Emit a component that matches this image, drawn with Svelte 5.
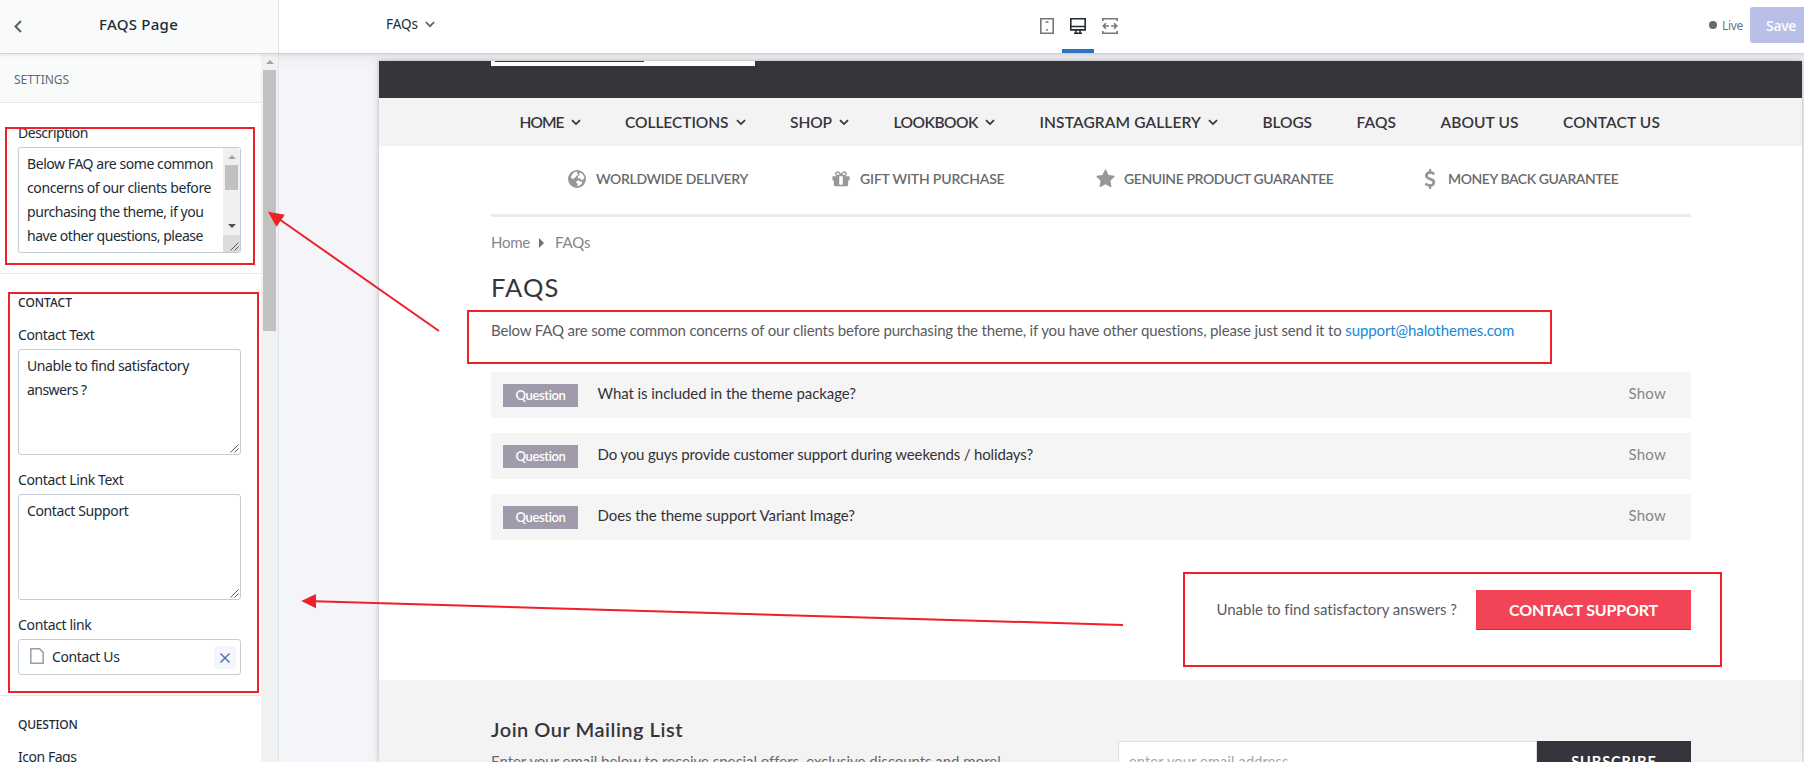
<script>
  // Tracks a run of text so that it spans the given width.
  function fit(node, width) {
    const natural = node.getBoundingClientRect().width;
    const count = node.textContent.length;
    node.style.letterSpacing = `${(width - natural) / count}px`;
  }

  const nav = [
    { label: 'HOME', width: 44, sub: true },
    { label: 'COLLECTIONS', width: 103.5, sub: true },
    { label: 'SHOP', width: 42, sub: true },
    { label: 'LOOKBOOK', width: 84.5, sub: true },
    { label: 'INSTAGRAM GALLERY', width: 161.5, sub: true },
    { label: 'BLOGS', width: 49.5 },
    { label: 'FAQS', width: 39.5 },
    { label: 'ABOUT US', width: 78 },
    { label: 'CONTACT US', width: 97 }
  ];

  const perks = [
    { icon: 'globe', label: 'WORLDWIDE DELIVERY', width: 152 },
    { icon: 'gift', label: 'GIFT WITH PURCHASE', width: 144.5 },
    { icon: 'star', label: 'GENUINE PRODUCT GUARANTEE', width: 209.5 },
    { icon: 'dollar', label: 'MONEY BACK GUARANTEE', width: 170.5 }
  ];

  const questions = [
    { text: 'What is included in the theme package?', width: 258.5 },
    { text: 'Do you guys provide customer support during weekends / holidays?', width: 435.5 },
    { text: 'Does the theme support Variant Image?', width: 257.5 }
  ];

  const description = [
    { text: 'Below FAQ are some common', width: 186 },
    { text: 'concerns of our clients before', width: 184 },
    { text: 'purchasing the theme, if you', width: 176.5 },
    { text: 'have other questions, please', width: 176 }
  ];
</script>

{#snippet grip()}
  <svg class="grip" width="9" height="9" viewBox="0 0 9 9"><path d="M.5 8.5l8-8M4.5 8.5l4-4" /></svg>
{/snippet}

<div class="app">
  <header class="topbar">
    <div class="side-head">
      <svg class="back" width="8" height="13" viewBox="0 0 8 13"><path d="M7 1L1.5 6.5 7 12" /></svg>
      <h1><span use:fit={79}>FAQS Page</span></h1>
    </div>
    <div class="page-pick">
      <span use:fit={32}>FAQs</span>
      <svg width="10" height="7" viewBox="0 0 10 7"><path d="M.8 1l4.2 4.2L9.2 1" /></svg>
    </div>
    <div class="devices">
      <span class="device">
        <svg width="16" height="16" viewBox="0 0 16 16"><path d="M1.8.8h12.4v14.4H1.8zM6.5 4h3M7 12h2" /></svg>
      </span>
      <span class="device on">
        <svg width="16" height="16" viewBox="0 0 16 16"><path d="M.8.8h14.4v11.1H.8zM.8 8.5h14.4M6 12v3.2M10 12v3.2M4 15.2h8" /></svg>
      </span>
      <span class="device">
        <svg width="16" height="16" viewBox="0 0 16 16"><path d="M.8 3V.8h14.4V3M.8 13v2.2h14.4V13M7 8H1.6M4 5.2L1.2 8 4 10.8M9 8h5.4M12 5.2L14.8 8 12 10.8" /></svg>
      </span>
    </div>
    <div class="status">
      <i class="dot"></i>
      <span class="live" use:fit={21}>Live</span>
      <button class="save"><span use:fit={30}>Save</span></button>
    </div>
  </header>

  <div class="body">
    <aside>
      <div class="panel">
        <h2 class="settings"><span use:fit={55}>SETTINGS</span></h2>
        <section class="first">
          <div class="label clip"><span use:fit={70}>Description</span></div>
          <div class="area">
            <div class="copy">
              {#each description as line}
                <div><span use:fit={line.width}>{line.text}</span></div>
              {/each}
            </div>
            <div class="mini-bar">
              <i class="up"></i>
              <i class="mini-thumb"></i>
              <i class="down"></i>
              <div class="corner">{@render grip()}</div>
            </div>
          </div>
        </section>
        <section>
          <h3><span use:fit={54}>CONTACT</span></h3>
          <div class="label"><span use:fit={76.500}>Contact Text</span></div>
          <div class="area">
            <div class="copy">
              <div><span use:fit={162}>Unable to find satisfactory</span></div>
              <div><span use:fit={59.500}>answers ?</span></div>
            </div>
            {@render grip()}
          </div>
          <div class="label next"><span use:fit={105.500}>Contact Link Text</span></div>
          <div class="area">
            <div class="copy"><div><span use:fit={101.500}>Contact Support</span></div></div>
            {@render grip()}
          </div>
          <div class="label next"><span use:fit={73.500}>Contact link</span></div>
          <div class="link-box">
            <svg class="doc" width="14" height="16" viewBox="0 0 14 16"><path d="M.8.8h8.7l3.7 3.7v10.7H.8z" /></svg>
            <span use:fit={67.500}>Contact Us</span>
            <button class="clear" aria-label="Clear">
              <svg width="10" height="10" viewBox="0 0 10 10"><path d="M.5.5l9 9M9.5.5l-9 9" /></svg>
            </button>
          </div>
        </section>
        <section class="last">
          <h3><span use:fit={59.500}>QUESTION</span></h3>
          <div class="label"><span use:fit={58.500}>Icon Faqs</span></div>
        </section>
      </div>
      <div class="scrollbar"><i class="up"></i><i class="thumb"></i></div>
    </aside>

    <main>
      <div class="preview">
        <div class="dark"><div class="search"><i></i></div></div>
        <nav>
          {#each nav as item}
            <a href="#top">
              <span use:fit={item.width}>{item.label}</span>
              {#if item.sub}
                <svg width="10" height="7" viewBox="0 0 10 7"><path d="M1 1.2l4 3.9 4-3.9" /></svg>
              {/if}
            </a>
          {/each}
        </nav>

        <div class="content">
          <div class="perks">
            {#each perks as perk}
              <div class="perk">
                {#if perk.icon === 'globe'}
                  <svg width="18" height="18" viewBox="0 0 18 18">
                    <circle cx="9" cy="9" r="9" />
                    <path class="land" d="M6.200 2.200L9.400 1.600l-.6 1.500 1.500 1-.4 1.300-1.800.4-.5 1.700-1.700.6-.8 1.200-1.600-1-.6-2zM11.500 2.300l3 1.700 1.900 3.200-1 2.300-1.900.4-1.300-1.500-2-.2-.6-1.700 1.700-1.300zM8.600 11l1.800-.6 2.100 1.100 1.900.3-.9 2.100-2.300 1.900-1.900.5.3-2.500-1.300-1.300z" />
                  </svg>
                {:else if perk.icon === 'gift'}
                  <svg width="18" height="20" viewBox="0 0 1536 1792"><path d="M928 1356v-716h-320v716q0 25 18 38.5t46 13.5h192q28 0 46-13.5t18-38.5zm-456-844h195l-126-161q-26-31-69-31-40 0-68 28t-28 68 28 68 68 28zm688-96q0-40-28-68t-68-28q-43 0-69 31l-125 161h194q40 0 68-28t28-68zm376 256v320q0 14-9 23t-23 9h-96v416q0 40-28 68t-68 28h-1088q-40 0-68-28t-28-68v-416h-96q-14 0-23-9t-9-23v-320q0-14 9-23t23-9h440q-93 0-158.5-65.5t-65.5-158.5 65.5-158.5 158.500-65.500q107 0 168 77l128 165 128-165q61-77 168-77 93 0 158.500 65.500t65.500 158.500-65.500 158.500-158.500 65.500h440q14 0 23 9t9 23z" /></svg>
                {:else if perk.icon === 'star'}
                  <svg width="19" height="20" viewBox="0 0 1664 1792"><path d="M1664 647q0 22-26 48l-363 354 86 500q1 7 1 20 0 21-10.5 35.5t-30.5 14.500q-19 0-40-12l-449-236-449 236q-22 12-40 12-21 0-31.500-14.500t-10.500-35.500q0-6 2-20l86-500-364-354q-25-27-25-48 0-37 56-46l502-73 225-455q19-41 49-41t49 41l225 455 502 73q56 9 56 46z" /></svg>
                {:else}
                  <svg width="12" height="20" viewBox="0 0 1024 1792"><path d="M978 1185q0 153-99.5 263.5t-258.5 136.5v175q0 14-9 23t-23 9h-135q-13 0-22.5-9.5t-9.5-22.5v-175q-66-9-127.5-31t-101.5-44.5-74-48-46.5-37.5-17.5-18q-17-21-2-41l103-135q7-10 23-12 15-2 24 9l2 2q113 99 243 125 37 8 74 8 81 0 142.500-43t61.500-122q0-28-15-53t-33.500-42-58.500-37.500-66-32-80-32.500q-39-16-61.500-25t-61.500-26.500-62.500-31-56.500-35.500-53.500-42.500-43.500-49-35.500-58-21-66.500-8.500-78q0-138 98-242t255-134v-180q0-13 9.500-22.500t22.500-9.500h135q14 0 23 9t9 23v176q57 6 110.500 23t87 33.500 63.500 37.500 39 29 15 14q17 18 5 38l-81 146q-8 15-23 16-14 3-27-7-3-3-14.500-12t-39-26.500-58.500-32-74.500-26-85.500-11.500q-95 0-155 43t-60 111q0 26 8.500 48t29.500 41.500 39.500 33 56 31 60.500 27 70 27.500q53 20 81 31.500t76 35 75.500 42.500 62 50 53 63.500 31.500 76.500 13 94z" /></svg>
                {/if}
                <span use:fit={perk.width}>{perk.label}</span>
              </div>
            {/each}
          </div>

          <div class="crumbs">
            <span use:fit={39}>Home</span>
            <i></i>
            <span use:fit={35.500}>FAQs</span>
          </div>
          <h2 class="title"><span use:fit={68.500}>FAQS</span></h2>
          <p class="intro"><span use:fit={854.500}>Below FAQ are some common concerns of our clients before purchasing the theme, if you have other questions, please just send it to&nbsp;</span><a href="#mail" use:fit={169}>support@halothemes.com</a></p>

          <div class="faqs">
            {#each questions as q}
              <div class="faq">
                <span class="badge"><b use:fit={50}>Question</b></span>
                <span class="q" use:fit={q.width}>{q.text}</span>
                <span class="show" use:fit={37.500}>Show</span>
              </div>
            {/each}
          </div>

          <div class="support">
            <span use:fit={240.500}>Unable to find satisfactory answers ?</span>
            <button><span use:fit={149}>CONTACT SUPPORT</span></button>
          </div>
        </div>

        <footer>
          <div class="mail-copy">
            <h3><span use:fit={192}>Join Our Mailing List</span></h3>
            <p><span use:fit={509.500}>Enter your email below to receive special offers, exclusive discounts and more!</span></p>
          </div>
          <div class="mail-form">
            <div class="field"><span use:fit={159.500}>enter your email address</span></div>
            <button><span use:fit={85.500}>SUBSCRIBE</span></button>
          </div>
        </footer>
      </div>
    </main>
  </div>

  <svg class="notes" width="1804" height="762" viewBox="0 0 1804 762">
    <g fill="none" stroke="#ee2028" stroke-width="2">
      <rect x="6" y="128" width="248" height="136" />
      <rect x="9" y="293" width="249" height="399" />
      <rect x="468" y="311" width="1083" height="52" />
      <rect x="1184" y="573" width="537" height="93" />
      <path d="M439 331L279 219M1123 625L315 601.3" />
    </g>
    <path fill="#ee2028" d="M268 211.700l16.800 3-8.300 12zM301.300 601l14.700-7v14.300z" />
  </svg>
</div>

<style>
  :global(body) { margin: 0; overflow: hidden; }
  .app {
    position: relative; width: 1804px; height: 762px; overflow: hidden;
    display: flex; flex-direction: column; background: #fff;
    font-family: "Noto Sans", "Open Sans", sans-serif; font-size: 14px; color: #212b36;
  }
  .app :global(*) { box-sizing: border-box; }
  h1, h2, h3, p { margin: 0; font-weight: 400; }
  span, b { display: inline-block; white-space: nowrap; }
  button { border: 0; padding: 0; font: inherit; }
  a { text-decoration: none; color: inherit; }
  svg { flex: none; display: block; }
  i { flex: none; display: block; }

  .topbar {
    flex: none; height: 54px; display: grid;
    grid-template-columns: 279px 752px 94px 1fr;
    border-bottom: 1px solid #d0d4d8; background: #fff; position: relative; z-index: 2;
    box-shadow: 0 1px 3px rgba(60, 66, 72, .12);
  }
  .side-head {
    display: flex; align-items: center; padding: 0 0 4px 14px;
    border-right: 1px solid #dfe3e8; background: #f9fafa;
  }
  .back path, .page-pick path { fill: none; stroke: #5c5f62; stroke-width: 2; }
  .back { margin-top: 4px; }
  h1 { margin: -1px 0 0 77px; font-size: 15px; line-height: 20px; font-weight: 500; }
  .page-pick { display: flex; align-items: center; gap: 7px; padding: 0 0 5px 107px; font-size: 13.5px; }
  .page-pick path { stroke-width: 1.7; }
  .page-pick svg { margin-top: 1px; }
  .devices { display: flex; }
  .device { width: 31px; display: flex; justify-content: center; padding-top: 18px; }
  .device path { fill: none; stroke: #74777b; stroke-width: 1.6; }
  .device.on { width: 32px; border-bottom: 4px solid #2c74bf; }
  .device.on path { stroke: #212b36; }
  .status { display: flex; justify-content: flex-end; align-items: flex-start; padding-top: 7px; }
  .dot { width: 8px; height: 8px; border-radius: 50%; background: #666b6b; margin-top: 14px; }
  .live { font-size: 12px; line-height: 18px; margin: 10px 7px 0 5px; color: #637381; }
  .save { width: 54px; height: 36px; padding-left: 16px; border-radius: 3px 0 0 3px; background: #babfe7; color: #fff; text-align: left; font-size: 14px; font-weight: 500; }

  .body { flex: 1; min-height: 0; display: flex; }
  aside { flex: none; width: 279px; display: flex; border-right: 1px solid #dfe3e8; }
  .panel { width: 261px; overflow: hidden; background: #fff; }
  .settings { height: 49px; padding: 16px 14px; border-bottom: 1px solid #e3e5e6; background: #f9fafa; font-size: 12px; line-height: 20px; color: #5d6b78; }
  section { padding: 19px 20px 20px 18px; border-bottom: 1px solid #e6e8ea; }
  section.first { padding-top: 20px; }
  section.last { border: 0; }
  h3 { font-size: 12px; line-height: 20px; font-weight: 500; }
  h3 + .label { margin-top: 12px; }
  .label { height: 20px; line-height: 20px; margin-bottom: 4px; }
  .clip { clip-path: inset(6px 0 0 0); }
  .label.next { margin-top: 15px; }
  .area {
    height: 106px; width: 223px; border: 1px solid #c4cdd5; border-radius: 3px;
    display: flex; justify-content: space-between; align-items: flex-end;
  }
  .copy { align-self: flex-start; padding: 4px 0 0 8px; line-height: 24px; }
  .copy div { height: 24px; }
  .grip { margin: 0 1px 1px 0; }
  .grip path { fill: none; stroke: #55585c; stroke-width: 1; }
  .mini-bar { width: 17px; height: 104px; background: #f0f0f0; display: flex; flex-direction: column; align-items: center; padding-top: 7px; }
  .up, .down { width: 0; height: 0; border: 4px solid transparent; border-top: 0; border-bottom-color: #a3a3a8; }
  .mini-thumb { width: 13px; height: 25px; margin-top: 6px; background: #c1c1c1; }
  .down { border-top: 4px solid #505050; border-bottom: 0; margin-top: 34px; }
  .corner { width: 17px; height: 17px; margin-top: auto; background: #dcdcdc; display: flex; justify-content: flex-end; align-items: flex-end; }
  .link-box { height: 36px; width: 223px; display: flex; align-items: center; border: 1px solid #c4cdd5; border-radius: 3px; padding: 0 4px 0 11px; }
  .link-box span { margin-top: -1px; }
  .doc path { fill: none; stroke: #919eab; stroke-width: 1.5; }
  .doc { margin-right: 8px; margin-top: -3px; }
  .clear { width: 22px; height: 23px; margin: 1px 0 0 auto; border-radius: 3px; background: #f4f6fa; display: flex; align-items: center; justify-content: center; }
  .clear path { fill: none; stroke: #3d6fb8; stroke-width: 1.4; }
  .scrollbar { width: 17px; background: #f0f1f1; display: flex; flex-direction: column; align-items: center; padding-top: 6px; }
  .thumb { width: 13px; height: 261px; margin-top: 6px; background: #c1c1c1; }

  main { flex: 1; min-width: 0; padding: 7px 2px 0 100px; background: linear-gradient(#ebecef, #f4f5f9 14px); }
  .preview { height: 701px; display: flex; flex-direction: column; background: #fff; box-shadow: 0 0 4px rgba(33, 43, 54, .3), 0 0 12px rgba(33, 43, 54, .08); font-family: Lato, "Open Sans", sans-serif; }
  .dark { flex: none; height: 37px; padding-left: 112px; background: #36353b; }
  .search { width: 264px; height: 5px; padding-left: 4px; background: #fff; }
  .search i { width: 149px; height: 1px; background: #36353b; }
  nav { flex: none; height: 48px; display: flex; align-items: center; gap: 44.5px; padding-left: 140.5px; background: #f3f3f3; color: #36353b; font-size: 15.5px; font-weight: 600; }
  nav a { display: flex; align-items: center; gap: 7px; }
  nav svg { margin-top: 1px; }
  nav path { fill: none; stroke: #36353b; stroke-width: 1.8; }
  .content { flex: none; width: 1200px; height: 534px; margin-left: 112px; }
  .perks { height: 71px; display: grid; grid-template-columns: 264px 264px 328px 1fr; align-items: center; padding: 0 0 2px 77px; border-bottom: 3px solid #ebeded; color: #6a6a6e; font-size: 14px; font-weight: 600; }
  .perk { display: flex; align-items: center; gap: 10px; }
  .perk:nth-child(3) { gap: 9px; }
  .perk:last-child { gap: 12px; }
  .perk span { margin-top: -1px; }
  .perk svg { fill: #97979a; }
  .perk .land { fill: #fff; }
  .crumbs { display: flex; align-items: center; height: 20px; margin-top: 15px; color: #858588; font-size: 15px; }
  .crumbs i { margin: 1px 11px 0 9px; border: 5px solid transparent; border-left-color: #717174; border-right: 0; }
  .title { height: 34px; line-height: 34px; margin-top: 18px; font-size: 25.5px; color: #36353b; }
  .intro { height: 24px; line-height: 24px; margin-top: 14px; font-size: 15px; color: #5b5b5f; display: flex; }
  .intro a { color: #1787d9; }
  .faqs { display: flex; flex-direction: column; gap: 15px; margin-top: 30px; }
  .faq { height: 46px; display: flex; align-items: center; padding: 0 25px 0 12px; background: #f5f5f5; font-size: 15px; color: #333238; }
  .badge { width: 75px; height: 23px; line-height: 23px; margin-right: 19.5px; background: #9f9bab; color: #fff; text-align: center; font-size: 13px; }
  .badge b { font-weight: 600; }
  .q, .show { margin-top: -5px; }
  .show { margin-left: auto; color: #858588; }
  .support { display: flex; justify-content: flex-end; align-items: center; gap: 19px; height: 40px; margin-top: 50px; font-size: 15px; color: #5b5b5f; }
  .support > span { margin-top: -2px; }
  .support button { width: 215px; height: 40px; background: #f24357; border-bottom: 1px solid #e8202f; color: #fff; font-size: 16px; font-weight: 700; }
  footer { flex: 1; min-height: 0; overflow: hidden; display: flex; justify-content: space-between; padding: 0 111px 0 112px; background: #f3f3f3; }
  .mail-copy { padding-top: 35px; }
  .mail-copy h3 { font-size: 20px; line-height: 28px; font-weight: 600; color: #36353b; }
  .mail-copy p { font-size: 15px; line-height: 20px; margin-top: 8px; color: #6a6a6e; }
  .mail-form { display: flex; padding-top: 61px; height: 101px; }
  .field { width: 419px; padding: 10px; border: 1px solid #dedede; background: #fff; font-size: 14.5px; line-height: 20px; color: #a6a6a8; }
  .mail-form button { width: 154px; background: #36353b; color: #fff; font-size: 14.5px; font-weight: 700; }

  .notes { position: absolute; inset: 0; z-index: 5; pointer-events: none; }
</style>
